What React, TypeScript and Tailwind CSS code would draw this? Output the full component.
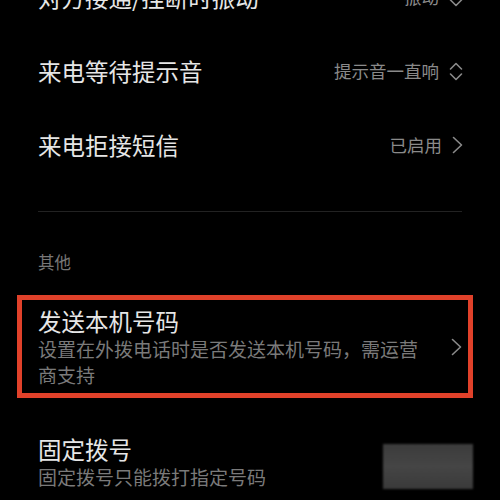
import React from 'react'

const font = { fontFamily: '"Noto Sans CJK SC", "Noto Sans", sans-serif' }

const UpDown = () => (
  <svg width="14" height="19" viewBox="0 0 14 19" fill="none" stroke="#8a8a8a" strokeWidth="1.6" strokeLinecap="round" strokeLinejoin="round">
    <path d="M1.5 7 L7 1.5 L12.5 7" />
    <path d="M1.5 12 L7 17.5 L12.5 12" />
  </svg>
)

const Right = () => (
  <svg width="11" height="18" viewBox="0 0 11 18" fill="none" stroke="#8a8a8a" strokeWidth="1.6" strokeLinecap="round" strokeLinejoin="round">
    <path d="M1.5 1.5 L9.5 9 L1.5 16.5" />
  </svg>
)

const Row = ({ title, value, icon }: { title: string; value: string; icon: 'updown' | 'right' }) => (
  <div className="flex h-[74px] items-center pl-[38px] pr-[37px]">
    <p className="text-[23.5px] leading-[30px] text-[#e6e6e6]">{title}</p>
    <div className="ml-auto flex items-center gap-[10px]">
      <span className="text-[17.5px] leading-[24px] text-[#8a8a8a]">{value}</span>
      {icon === 'updown' ? <UpDown /> : <Right />}
    </div>
  </div>
)

export default function App() {
  return (
    <div className="h-[500px] w-[500px] overflow-hidden bg-black" style={font}>
      <div className="-mt-[40px]">
        <Row title="对方接通/挂断时振动" value="振动" icon="updown" />
        <Row title="来电等待提示音" value="提示音一直响" icon="updown" />
        <Row title="来电拒接短信" value="已启用" icon="right" />
      </div>
      <div className="mx-[38px] mt-[29px] h-px bg-[#222222]" />
      <p className="ml-[38px] mt-[39px] text-[16.5px] leading-[22px] text-[#777777]">其他</p>
      <div className="ml-[17px] mr-[27px] mt-[22px] flex items-center border-[5px] border-[#e0412a] pb-[5px] pl-[16px] pr-[6px] pt-[6px]">
        <div className="max-w-[392px]">
          <p className="text-[23.5px] leading-[30px] text-[#e6e6e6]">发送本机号码</p>
          <p className="text-[19px] leading-[26px] text-[#7a7a7a]">设置在外拨电话时是否发送本机号码，需运营商支持</p>
        </div>
        <div className="ml-auto">
          <Right />
        </div>
      </div>
      <div className="mt-[36px] flex items-center pl-[38px] pr-[27px]">
        <div>
          <p className="text-[23.5px] leading-[30px] text-[#e6e6e6]">固定拨号</p>
          <p className="text-[19px] leading-[26px] text-[#7a7a7a]">固定拨号只能拨打指定号码</p>
        </div>
        <div className="ml-auto mt-[8px] h-[45px] w-[90px] bg-gradient-to-b from-[#3c3c3c] via-[#454545] to-[#3a3a3a] blur-[1px]" />
      </div>
    </div>
  )
}
